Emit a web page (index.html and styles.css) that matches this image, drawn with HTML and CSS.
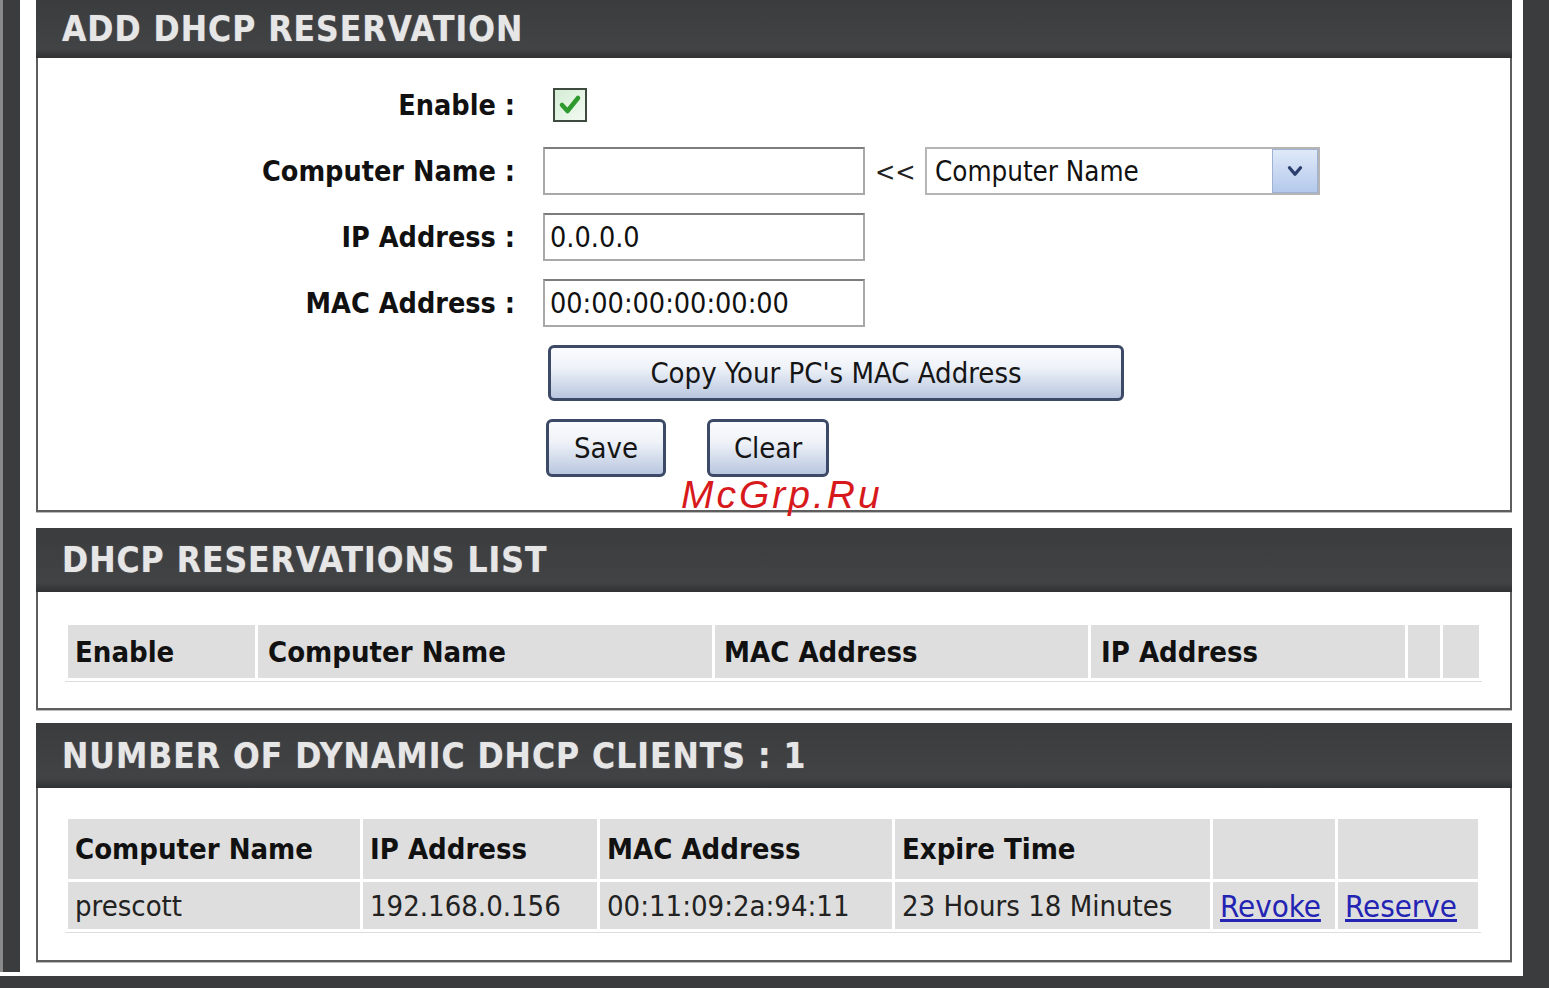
FILE: index.html
```html
<!DOCTYPE html>
<html>
<head>
<meta charset="utf-8">
<link rel="stylesheet" href="styles.css">
</head>
<body>
<div class="page">
  <div class="frame">
    <div class="lstrip"></div>
    <main class="main">
      <section class="box box1">
        <div class="head"><h2>ADD DHCP RESERVATION</h2></div>
        <div class="body form">
          <div class="lbl">Enable :</div>
          <div class="fld"><span class="chk"><svg viewBox="0 0 30 30" width="30" height="30"><path d="M7 15 L12.5 21 L23 8" fill="none" stroke="#2e9a2e" stroke-width="4.5" stroke-linecap="round" stroke-linejoin="round"/></svg></span></div>

          <div class="lbl">Computer Name :</div>
          <div class="fld"><span class="inp"></span><span class="arr">&lt;&lt;</span><span class="sel"><span class="seltxt">Computer Name</span><span class="selbtn"><svg viewBox="0 0 20 20" width="22" height="22"><path d="M5 7 L10 13 L15 7" fill="none" stroke="#2b3f6e" stroke-width="3" stroke-linecap="round" stroke-linejoin="round"/></svg></span></span></div>

          <div class="lbl">IP Address :</div>
          <div class="fld"><span class="inp">0.0.0.0</span></div>

          <div class="lbl">MAC Address :</div>
          <div class="fld"><span class="inp">00:00:00:00:00:00</span></div>

          <div class="lbl"></div>
          <div class="fld"><span class="btn copy">Copy Your PC's MAC Address</span></div>

          <div class="lbl"></div>
          <div class="fld btns"><span class="btn save">Save</span><span class="btn clear">Clear</span></div>
        </div>
      </section>

      <section class="box box2">
        <div class="head"><h2>DHCP RESERVATIONS LIST</h2></div>
        <div class="body tbody2">
          <table class="grid g2">
            <colgroup><col class="c1"><col class="c2"><col class="c3"><col class="c4"><col class="c5"><col class="c6"></colgroup>
            <tr class="hrow"><th>Enable</th><th>Computer Name</th><th>MAC Address</th><th>IP Address</th><th></th><th></th></tr>
          </table>
        </div>
      </section>

      <section class="box box3">
        <div class="head"><h2>NUMBER OF DYNAMIC DHCP CLIENTS : 1</h2></div>
        <div class="body tbody3">
          <table class="grid g3">
            <colgroup><col class="d1"><col class="d2"><col class="d3"><col class="d4"><col class="d5"><col class="d6"></colgroup>
            <tr class="hrow"><th>Computer Name</th><th>IP Address</th><th>MAC Address</th><th>Expire Time</th><th></th><th></th></tr>
            <tr class="drow"><td>prescott</td><td>192.168.0.156</td><td>00:11:09:2a:94:11</td><td>23 Hours 18 Minutes</td><td><a href="#">Revoke</a></td><td><a href="#">Reserve</a></td></tr>
          </table>
        </div>
      </section>
    </main>
    <div class="gap"></div>
    <div class="rstrip"></div>
  </div>
  <div class="bottom"></div>
  <div class="wm">McGrp.Ru</div>
</div>
</body>
</html>
```

FILE: styles.css
```css
* { box-sizing: border-box; }
html, body { margin: 0; padding: 0; background: #fff; }
.page {
  position: relative;
  width: 1549px;
  height: 988px;
  overflow: hidden;
  background: #fff;
  font-family: "DejaVu Sans Condensed", "DejaVu Sans", sans-serif;
  color: #111;
}
.frame { display: flex; height: 976px; }
.lstrip { width: 20px; background: #3b3c3d; border-left: 3px solid #8a8a8a; height: 972px; }
.main { width: 1492px; padding-left: 16px; display: flex; flex-direction: column; }
.gap { width: 11px; }
.rstrip { width: 26px; background: #3b3c3d; }
.bottom { height: 12px; background: #3b3c3d; }

.box { background: #fff; border: 2px solid #5e5e5e; border-top: none; box-shadow: 0 1px 0 #bbb; }
.box1 { height: 512px; }
.box2 { height: 182px; margin-top: 16px; }
.box3 { height: 239px; margin-top: 13px; }

.head {
  background: linear-gradient(#3a3c3e, #414345 85%, #2f3133);
  display: flex; align-items: center;
  padding-left: 26px;
  margin: 0 -2px;
}
.box1 .head { height: 58px; }
.box2 .head { height: 64px; }
.box3 .head { height: 65px; }
.head h2 {
  margin: 0;
  font-family: "DejaVu Sans Condensed", "DejaVu Sans", sans-serif;
  font-weight: bold;
  font-size: 35px;
  letter-spacing: 1px;
  color: #e6e6e6;
  text-shadow: 0 0 1px #999;
}

.form {
  display: grid;
  grid-template-columns: 477px 1fr;
  grid-template-rows: 48px 48px 48px 48px 56px 58px;
  column-gap: 28px;
  row-gap: 18px;
  padding-top: 23px;
}
.lbl {
  text-align: right;
  font-weight: bold;
  font-size: 28.5px;
  display: flex; align-items: center; justify-content: flex-end;
  color: #111;
}
.fld { display: flex; align-items: center; font-size: 29px; }
.chk {
  margin-left: 10px;
  width: 34px; height: 34px;
  border: 2px solid #3d4a3d;
  background: linear-gradient(135deg, #d4ecd4, #f2fbf2);
  display: flex; align-items: center; justify-content: center;
}
.inp {
  width: 322px; height: 48px;
  border: 2px solid #a9a9a9;
  border-top-color: #7c7c7c;
  display: flex; align-items: center;
  padding-left: 5px;
  font-size: 28.5px;
  color: #111;
}
.arr { margin-left: 10px; width: 50px; font-size: 27px; color: #222; }
.sel {
  width: 395px; height: 48px;
  border: 2px solid #b5b5b5;
  display: flex; align-items: center;
  padding-left: 8px;
}
.seltxt { flex: 1; font-size: 27.5px; }
.selbtn {
  width: 46px; height: 44px;
  background: linear-gradient(#dfe9f8, #b4c9ec);
  border: 1px solid #9fb2d4;
  display: flex; align-items: center; justify-content: center;
}
.btn {
  display: flex; align-items: center; justify-content: center;
  border: 3px solid #3c4a68;
  border-radius: 6px;
  background: linear-gradient(#fbfcfe 0%, #eef2f8 40%, #b8c6df 100%);
  font-size: 29px;
  color: #151515;
}
.copy { margin-left: 5px; width: 576px; height: 56px; }
.btns { gap: 41px; margin-left: 3px; }
.save { width: 120px; height: 58px; }
.clear { width: 122px; height: 58px; }

.tbody2 { padding: 30px 28px 0; }
.tbody3 { padding: 28px 28px 0; }
.grid {
  border-collapse: separate;
  border-spacing: 3px;
  width: 1416px;
  table-layout: fixed;
  margin-left: -1px;
  box-shadow: 0 1px 0 #ddd;
}
.grid th, .grid td {
  background: #dedede;
  text-align: left;
  padding: 0 0 0 7px;
  white-space: nowrap;
  overflow: hidden;
}
.grid th { font-weight: bold; font-size: 29px; }
.grid td { font-weight: normal; color: #222; font-size: 29px; }
.g2 .hrow th { height: 53px; }
.g2 th:nth-child(2) { padding-left: 10px; }
.g2 th:nth-child(3) { padding-left: 9px; }
.g2 th:nth-child(4) { padding-left: 10px; }
.c1 { width: 187px; } .c2 { width: 454px; } .c3 { width: 373px; } .c4 { width: 314px; } .c5 { width: 32px; } .c6 { width: 36px; }
.d1 { width: 292px; } .d2 { width: 234px; } .d3 { width: 292px; } .d4 { width: 315px; } .d5 { width: 122px; } .d6 { width: 140px; }
.g3 .hrow th { height: 60px; }
.g3 .drow td { height: 47px; }
.grid a { color: #2323b4; text-decoration: underline; font-size: 31px; }

.wm {
  position: absolute;
  left: 681px; top: 473px;
  font-family: "Liberation Sans", Arial, sans-serif;
  font-style: italic;
  font-size: 39px;
  letter-spacing: 3px;
  color: #d7191c;
}
```
